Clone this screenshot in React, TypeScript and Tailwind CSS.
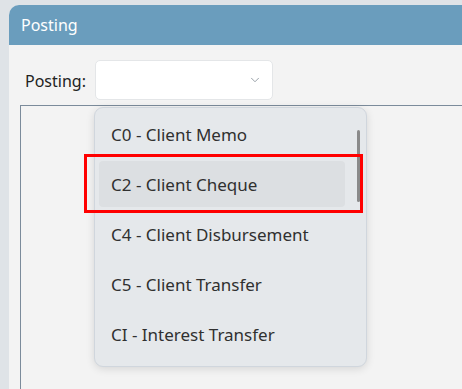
import { ChevronDown } from "lucide-react";

const options = [
  "C0 - Client Memo",
  "C2 - Client Cheque",
  "C4 - Client Disbursement",
  "C5 - Client Transfer",
  "CI - Interest Transfer",
];

function App() {
  return (
    <div
      className="relative w-[462px] h-[389px] overflow-hidden bg-[#dfe3e7] pt-[5px] pl-[9px]"
      style={{ fontFamily: "'Noto Sans', sans-serif" }}
    >
      <div className="h-full flex flex-col bg-[#f3f3f3] rounded-tl-[10px] overflow-hidden">
        {/* header */}
        <div className="h-[40px] shrink-0 bg-[#6a9dbd] text-white text-[16px] flex items-center pl-[12px]">
          Posting
        </div>

        {/* posting select row */}
        <div className="flex items-center pt-[15px] pl-[16px] gap-[9px]">
          <label className="text-[16px] text-[#222] pt-[1px]">Posting:</label>
          <div className="w-[178px] h-[40px] bg-white rounded-[5px] border border-[#e4e6e8] flex items-center justify-end pr-[10px]">
            <ChevronDown className="w-[14px] h-[14px] text-[#8a939c]" strokeWidth={1.5} />
          </div>
        </div>

        {/* content box */}
        <div className="flex-1 mt-[5px] ml-[11px] border-l border-t border-[#7b8b9b]" />
      </div>

      {/* dropdown list */}
      <div className="absolute left-[94px] top-[107px] w-[273px] h-[260px] bg-[#e5e8eb] border border-[#d0d6dd] rounded-[9px] shadow-[0_2px_8px_rgba(0,0,0,0.12)] pt-[3px] pl-[4px]">
        <div className="flex flex-col gap-[4px]">
          {options.map((o, i) => (
            <div
              key={o}
              className={
                "w-[246px] h-[46px] flex items-center pl-[12px] pt-[2px] text-[17px] text-[#303030] rounded-[4px] " +
                (i === 1 ? "bg-[#dcdfe2]" : "")
              }
            >
              {o}
            </div>
          ))}
        </div>
        <div className="absolute left-[262px] top-[22px] w-[3px] h-[72px] rounded-full bg-[#8a8a8a]" />
      </div>

      {/* red highlight annotation */}
      <div className="absolute left-[84px] top-[154px] w-[279px] h-[59px] border-[3px] border-[#ff0000]" />
    </div>
  );
}

export default App;
